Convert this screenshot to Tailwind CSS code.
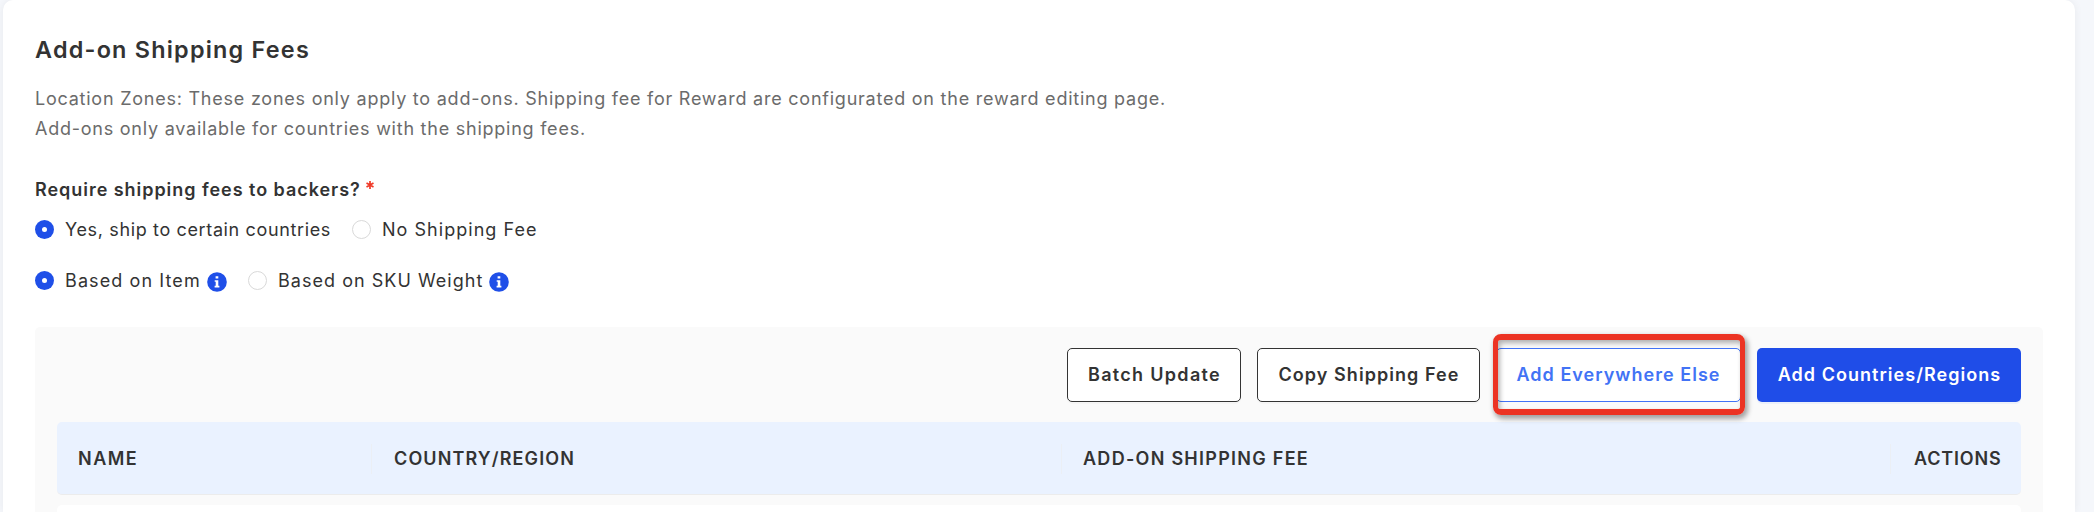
<!DOCTYPE html>
<html lang="en">
<head>
<meta charset="utf-8">
<title>Add-on Shipping Fees</title>
<script src="https://cdn.jsdelivr.net/npm/@tailwindcss/browser@4"></script>
</head>
<body class="h-[512px] overflow-hidden bg-[#f5f7fb] pl-[3px] pr-[19px] font-['Inter','Liberation_Sans',sans-serif] text-[18px] whitespace-nowrap text-[#333] [font-optical-sizing:none]">
<main class="flex h-[512px] flex-col rounded-t-[10px] bg-white px-8 pt-9 shadow-[0_0_8px_rgba(0,0,0,0.06)]">
  <h1 class="text-[23.4px] leading-7 font-semibold tracking-[1.224px]">Add-on Shipping Fees</h1>
  <div class="mt-5 leading-[30px] text-[#6b6b6b]">
    <p class="tracking-[0.764px]">Location Zones: These zones only apply to add-ons. Shipping fee for Reward are configurated on the reward editing page.</p>
    <p class="tracking-[0.76px]">Add-ons only available for countries with the shipping fees.</p>
  </div>

  <div class="mt-[34px] flex h-6 leading-6 font-semibold">
    <span class="w-[331px] tracking-[0.96px]">Require shipping fees to backers?</span>
    <svg class="mt-[3px] size-[8px]" viewBox="0 0 8 8" fill="none" stroke="#f03a28" stroke-width="1.7"><path d="M4 0v8M.5 2l7 4M7.5 2l-7 4"/></svg>
  </div>

  <div class="mt-[13px] flex h-[29px] items-center">
    <span class="flex size-[19px] items-center justify-center rounded-full bg-[#1f4fe8]"><span class="size-[5px] rounded-full bg-white"></span></span>
    <span class="ml-[11px] w-[287px] tracking-[0.637px]">Yes, ship to certain countries</span>
    <span class="size-[19px] rounded-full border border-[#d9d9d9] bg-white"></span>
    <span class="ml-[11px] tracking-[1.032px]">No Shipping Fee</span>
  </div>
  <div class="mt-[22px] flex h-[29px] items-center">
    <span class="flex size-[19px] items-center justify-center rounded-full bg-[#1f4fe8]"><span class="size-[5px] rounded-full bg-white"></span></span>
    <span class="ml-[11px] w-[142px] tracking-[1.1px]">Based on Item</span>
    <svg class="mt-[3px] h-[20px] w-[20px]" viewBox="0 0 20 20"><circle cx="10" cy="10" r="9.8" fill="#1f4fe8"/><path d="M8.6 4.2h2.7v2.3H8.6zM7.7 8.2h3.6v5.6h1.1v1.6H7.6v-1.6h1.1v-4h-1z" fill="#fff"/></svg>
    <span class="ml-[21px] size-[19px] rounded-full border border-[#d9d9d9] bg-white"></span>
    <span class="ml-[11px] w-[211px] tracking-[1.03px]">Based on SKU Weight</span>
    <svg class="mt-[3px] h-[20px] w-[20px]" viewBox="0 0 20 20"><circle cx="10" cy="10" r="9.8" fill="#1f4fe8"/><path d="M8.6 4.2h2.7v2.3H8.6zM7.7 8.2h3.6v5.6h1.1v1.6H7.6v-1.6h1.1v-4h-1z" fill="#fff"/></svg>
  </div>

  <section class="mt-8 flex min-h-0 flex-1 flex-col rounded-t-[5px] bg-[#fafafa] px-[22px] pt-[21px]">
    <div class="flex h-[54px] shrink-0 justify-end gap-4 font-semibold">
      <button class="w-[174px] rounded-[5px] border border-[#333] bg-white pb-[2px] pl-[1px] tracking-[1.309px] shadow-[0_2px_0_rgba(0,0,0,0.02)]">Batch Update</button>
      <button class="w-[223px] rounded-[5px] border border-[#333] bg-white pb-[2px] pl-[1px] tracking-[1.061px] shadow-[0_2px_0_rgba(0,0,0,0.02)]">Copy Shipping Fee</button>
      <div class="relative w-[245px]">
        <button class="h-full w-full rounded-[5px] border border-[#4273f5] bg-white pb-[2px] tracking-[1.028px] text-[#4273f5]">Add Everywhere Else</button>
        <div class="pointer-events-none absolute -top-[14px] -left-[3px] h-[81px] w-[252px] rounded-[8px] border-[6px] border-x-[5px] border-[#ec3323] shadow-[2px_3px_5px_1px_rgba(0,0,0,0.35),inset_2px_3px_5px_rgba(0,0,0,0.3)]"></div>
      </div>
      <button class="w-[264px] rounded-[5px] bg-[#1f4de8] pb-[2px] pl-[1px] tracking-[1.033px] text-white shadow-[0_2px_0_rgba(5,80,255,0.06)]">Add Countries/Regions</button>
    </div>
    <div class="mt-5 flex h-[73px] shrink-0 items-center rounded-[5px] border-b border-[#ececec] bg-[#eaf2ff] pt-[2px] leading-[30px] font-semibold">
      <div class="w-[315px] border-r border-[#ebeff5] pl-[21px] tracking-[1.5px]">NAME</div>
      <div class="w-[690px] border-r border-[#ebeff5] pl-[22px] tracking-[1.113px]">COUNTRY/REGION</div>
      <div class="w-[829px] border-r border-[#ebeff5] pl-[21px] tracking-[1.269px]">ADD-ON SHIPPING FEE</div>
      <div class="pl-[23px] tracking-[0.824px]">ACTIONS</div>
    </div>
    <div class="mt-[10px] min-h-0 flex-1 rounded-t-[5px] bg-white"></div>
  </section>
</main>
</body>
</html>
